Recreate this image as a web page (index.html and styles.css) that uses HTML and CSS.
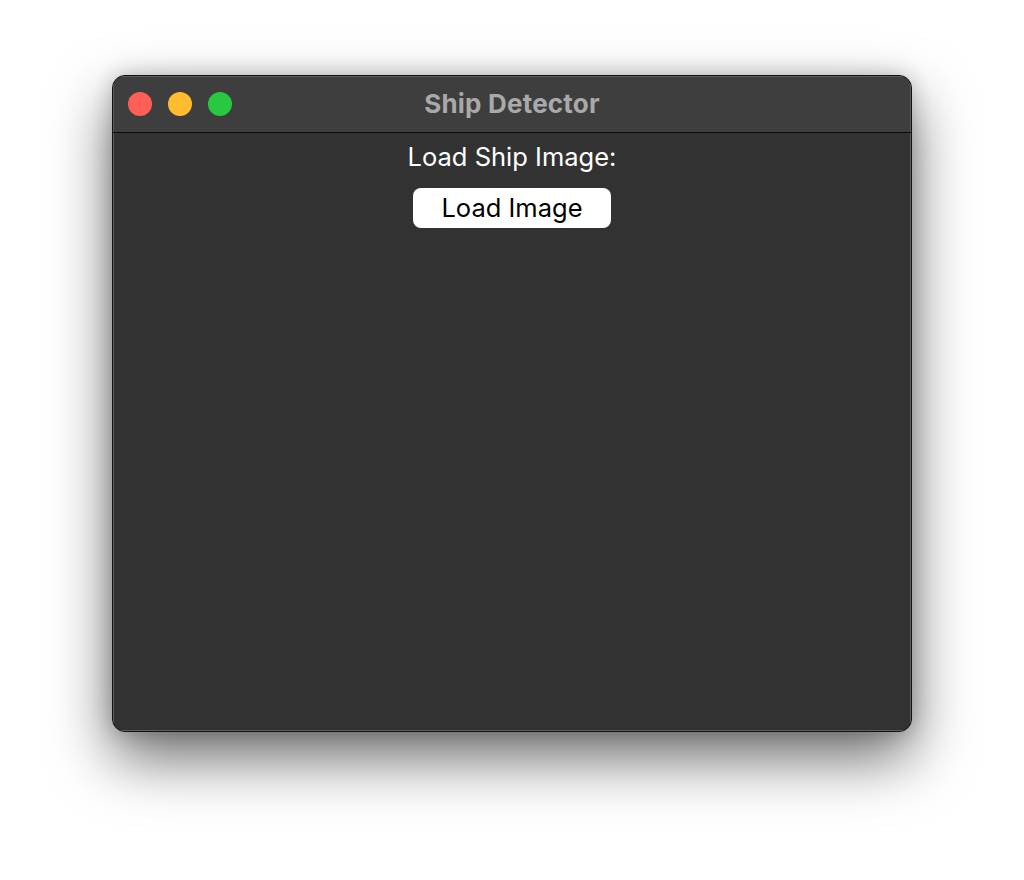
FILE: index.html
```html
<!DOCTYPE html>
<html>
<head>
<meta charset="utf-8">
<link rel="stylesheet" href="styles.css">
</head>
<body>
<div class="stage">
  <div class="window">
    <div class="titlebar">
      <div class="lights">
        <span class="light red"></span>
        <span class="light yellow"></span>
        <span class="light green"></span>
      </div>
      <div class="title">Ship Detector</div>
    </div>
    <div class="content">
      <div class="label">Load Ship Image:</div>
      <button class="btn">Load Image</button>
    </div>
  </div>
</div>
</body>
</html>
```
FILE: styles.css
```css
html, body {
  margin: 0;
  padding: 0;
  background: #ffffff;
  width: 1024px;
  height: 880px;
  overflow: hidden;
}
.stage {
  padding: 75px 0 0 112px;
}
.window {
  width: 800px;
  height: 657px;
  box-sizing: border-box;
  border-radius: 13px;
  border: 1px solid #111;
  box-shadow: 0 26px 60px rgba(0,0,0,0.58), 0 0 20px rgba(0,0,0,0.2);
  background: #323232;
  overflow: hidden;
  display: flex;
  flex-direction: column;
  font-family: "Inter", "Liberation Sans", sans-serif;
}
.titlebar {
  position: relative;
  height: 56px;
  flex: none;
  background: #3e3e3e;
  border-bottom: 1px solid #0c0c0c;
  box-shadow: inset 0 1px 0 #5e5e5e, inset 1px 0 0 #5e5e5e, inset -1px 0 0 #5e5e5e;
  display: flex;
  align-items: center;
  justify-content: center;
}
.lights {
  position: absolute;
  left: 15px;
  top: 16px;
  display: flex;
  gap: 16px;
}
.light {
  width: 24px;
  height: 24px;
  border-radius: 50%;
  display: block;
}
.red { background: #ff5f57; }
.yellow { background: #febc2e; }
.green { background: #28c840; }
.title {
  color: #a9a9a9;
  font-weight: 700;
  font-size: 26px;
  letter-spacing: 0.2px;
  margin-top: -2px;
}
.content {
  flex: 1;
  display: flex;
  flex-direction: column;
  align-items: center;
  padding-top: 9px;
  box-shadow: inset 1px 0 0 #5e5e5e, inset -1px 0 0 #5e5e5e, inset 0 -1px 0 #5e5e5e;
}
.label {
  color: #ffffff;
  font-size: 25.5px;
  line-height: 30px;
}
.btn {
  margin-top: 16px;
  width: 198px;
  height: 40px;
  border: none;
  border-radius: 8px;
  background: #ffffff;
  color: #000;
  font-family: "Inter", "Liberation Sans", sans-serif;
  font-size: 25.5px;
  line-height: 40px;
  padding: 0;
}
```
